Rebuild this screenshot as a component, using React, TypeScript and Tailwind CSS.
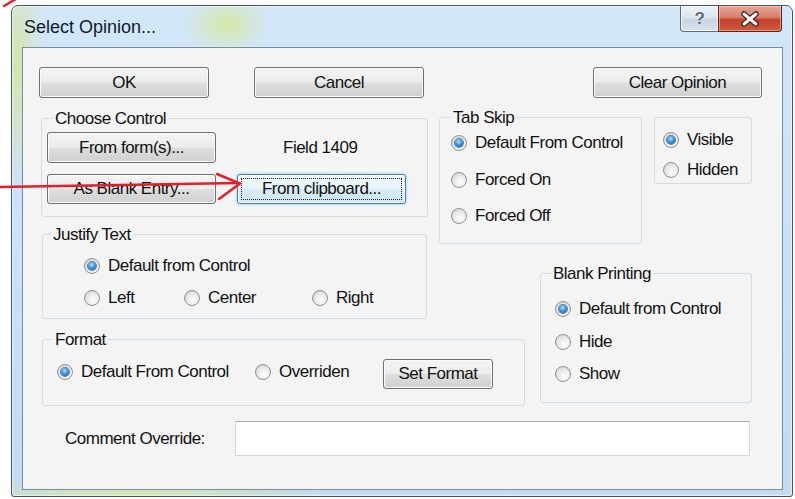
import React from 'react';

const btnFace =
  'border-[#707070] bg-[linear-gradient(to_bottom,#f4f4f4_0%,#ececec_48%,#dedede_52%,#d0d0d0_100%)] shadow-[inset_0_0_0_1px_#fbfbfb]';
const btnFocus =
  'border-[#3c7fb1] bg-[linear-gradient(to_bottom,#f3f9fd_0%,#e8f4fb_48%,#d9ecf8_52%,#cfe6f5_100%)] shadow-[0_0_3px_#7cc7f7,inset_0_0_0_1px_#ffffff]';

const Button = ({ label, className = '', focused = false }: { label: string; className?: string; focused?: boolean }) => (
  <button
    type="button"
    className={`relative flex shrink-0 items-center justify-center rounded-[3px] border ${focused ? btnFocus : btnFace} ${className}`}
  >
    {focused && <span className="absolute inset-[3px] border border-dotted border-[#222]" />}
    <span>{label}</span>
  </button>
);

const Radio = ({ label, checked = false, className = '' }: { label: string; checked?: boolean; className?: string }) => (
  <label className={`flex h-[20px] shrink-0 items-center gap-[8px] whitespace-nowrap ${className}`}>
    <span className="flex h-[16px] w-[16px] shrink-0 items-center justify-center rounded-full border border-[#8d9196] bg-[radial-gradient(circle_at_60%_65%,#fdfdfd_0%,#eeeeee_40%,#c9cccf_100%)]">
      {checked && (
        <span className="h-[8px] w-[8px] rounded-full bg-[radial-gradient(circle_at_45%_35%,#b9e3ff_0%,#3c98e2_45%,#0b4a90_100%)] shadow-[0_0_0_1px_#5b7fa3]" />
      )}
    </span>
    {label}
  </label>
);

const GroupBox = ({
  title,
  titleClass = 'left-[10px]',
  className = '',
  children,
}: {
  title?: string;
  titleClass?: string;
  className?: string;
  children: React.ReactNode;
}) => (
  <div className={`relative shrink-0 rounded-[3px] border border-[#d3dde5] ${className}`}>
    {title && (
      <span className={`absolute -top-[10px] bg-[#f4f4f4] px-[2px] leading-[20px] ${titleClass}`}>{title}</span>
    )}
    {children}
  </div>
);

export default function App() {
  return (
    <div className="relative h-[499px] w-[795px] overflow-hidden bg-white pl-[11px] pt-[5px] font-['Liberation_Sans',Arial,sans-serif] text-[17px] tracking-[-0.5px] text-[#111]">
      {/* window frame */}
      <div className="flex h-[492px] w-[782px] flex-col rounded-t-[7px] rounded-b-[3px] border border-[#44556a] bg-[radial-gradient(ellipse_45px_30px_at_215px_18px,rgba(215,232,140,0.75),transparent),radial-gradient(ellipse_30px_120px_at_4px_60px,rgba(214,228,150,0.8),transparent),radial-gradient(ellipse_200px_20px_at_120px_490px,rgba(214,232,150,0.8),transparent),linear-gradient(to_bottom,#d3e7f9_0%,#cbe2f8_40%,#c3dcf2_100%)] shadow-[inset_0_0_0_1px_rgba(255,255,255,0.55)]">
        {/* title bar */}
        <div className="flex h-[41px] shrink-0 items-start justify-between">
          <span className="pl-[12px] pt-[10px] text-[18px] leading-[22px] tracking-normal text-[#0e1a2a]">
            Select Opinion...
          </span>
          <div className="mr-[10px] flex h-[26px]">
            <div className="flex w-[38px] items-center justify-center rounded-bl-[4px] border border-t-0 border-r-0 border-[#5d6c7e] bg-[linear-gradient(to_bottom,#edf3f9_0%,#dbe5ef_45%,#c8d5e3_55%,#d6e2ee_100%)] shadow-[inset_0_0_0_1px_rgba(255,255,255,0.7)]">
              <span className="text-[17px] font-bold leading-none text-[#5a6878] [text-shadow:0_0_2px_#fff,0_0_1px_#fff]">?</span>
            </div>
            <div className="flex w-[64px] items-center justify-center rounded-br-[4px] border border-t-0 border-[#5a2318] bg-[linear-gradient(to_bottom,#eaa695_0%,#d8806b_45%,#c2412b_55%,#cd5a3c_100%)] shadow-[inset_0_0_0_1px_rgba(255,220,210,0.5)]">
              <svg width="20" height="16" viewBox="0 0 20 16">
                <path d="M4 3 L16 13 M16 3 L4 13" stroke="#3a1a14" strokeWidth="5.5" strokeLinecap="round" />
                <path d="M4 3 L16 13 M16 3 L4 13" stroke="#ffffff" strokeWidth="3" strokeLinecap="round" />
              </svg>
            </div>
          </div>
        </div>

        {/* client area */}
        <div className="ml-[10px] h-[443px] w-[761px] shrink-0 border border-[#7d8b9a] bg-[#f4f4f4]">
          {/* command buttons */}
          <div className="flex pt-[19px]">
            <Button label="OK" className="ml-[16px] h-[31px] w-[170px]" />
            <Button label="Cancel" className="ml-[45px] h-[31px] w-[170px]" />
            <Button label="Clear Opinion" className="ml-[169px] h-[31px] w-[169px]" />
          </div>

          <div className="mt-[19px] flex items-start">
            {/* left column */}
            <div className="w-[416px] shrink-0 pl-[18px] pt-[1px]">
              <GroupBox title="Choose Control" titleClass="left-[11px]" className="h-[99px] w-[387px] pl-[5px] pt-[13px]">
                <div className="flex h-[31px] items-center">
                  <Button label="From form(s)..." className="h-[31px] w-[169px]" />
                  <span className="ml-[67px]">Field 1409</span>
                </div>
                <div className="mt-[11px] flex h-[30px] items-center">
                  <Button label="As Blank Entry..." className="h-[30px] w-[169px]" />
                  <Button label="From clipboard..." focused className="ml-[21px] h-[30px] w-[169px]" />
                </div>
              </GroupBox>

              <GroupBox title="Justify Text" titleClass="left-[8px]" className="ml-[1px] mt-[17px] h-[85px] w-[385px] pl-[41px] pt-[21px]">
                <Radio label="Default from Control" checked />
                <div className="mt-[12px] flex">
                  <Radio label="Left" className="w-[100px]" />
                  <Radio label="Center" className="w-[128px]" />
                  <Radio label="Right" />
                </div>
              </GroupBox>

              <GroupBox title="Format" className="ml-[1px] mt-[20px] h-[67px] w-[483px] pl-[14px] pt-[19px]">
                <div className="flex items-start">
                  <Radio label="Default From Control" checked className="mt-[3px] w-[198px]" />
                  <Radio label="Overriden" className="mt-[3px] w-[128px]" />
                  <Button label="Set Format" className="h-[30px] w-[110px]" />
                </div>
              </GroupBox>
            </div>

            {/* right column */}
            <div>
              <div className="flex items-start">
                <GroupBox title="Tab Skip" titleClass="left-[11px]" className="flex h-[127px] w-[203px] flex-col gap-[16.5px] pl-[11px] pt-[15px]">
                  <Radio label="Default From Control" checked />
                  <Radio label="Forced On" />
                  <Radio label="Forced Off" />
                </GroupBox>
                <GroupBox className="ml-[12px] flex h-[67px] w-[98px] flex-col gap-[10px] pl-[8px] pt-[12px]">
                  <Radio label="Visible" checked />
                  <Radio label="Hidden" />
                </GroupBox>
              </div>
              <GroupBox title="Blank Printing" className="ml-[101px] mt-[29px] flex h-[130px] w-[212px] flex-col gap-[12.5px] pl-[14px] pt-[25px]">
                <Radio label="Default from Control" checked />
                <Radio label="Hide" />
                <Radio label="Show" />
              </GroupBox>
            </div>
          </div>

          {/* comment override */}
          <div className="mt-[15px] flex h-[35px] items-center pl-[42px]">
            <span className="w-[170px] shrink-0">Comment Override:</span>
            <input
              type="text"
              className="h-[35px] w-[515px] border border-[#d5d9de] border-t-[#a9adb3] bg-white outline-none"
            />
          </div>
        </div>
      </div>

      {/* red annotation arrows */}
      <svg className="pointer-events-none absolute left-0 top-0" width="795" height="499" viewBox="0 0 795 499">
        <g stroke="#e3202a" strokeWidth="2.5" strokeLinecap="round" fill="none">
          <path d="M0 187 L239 183" />
          <path d="M217 174 L240 183.5 L219 199" />
          <path d="M4 6 L16 -1" />
        </g>
      </svg>
    </div>
  );
}
